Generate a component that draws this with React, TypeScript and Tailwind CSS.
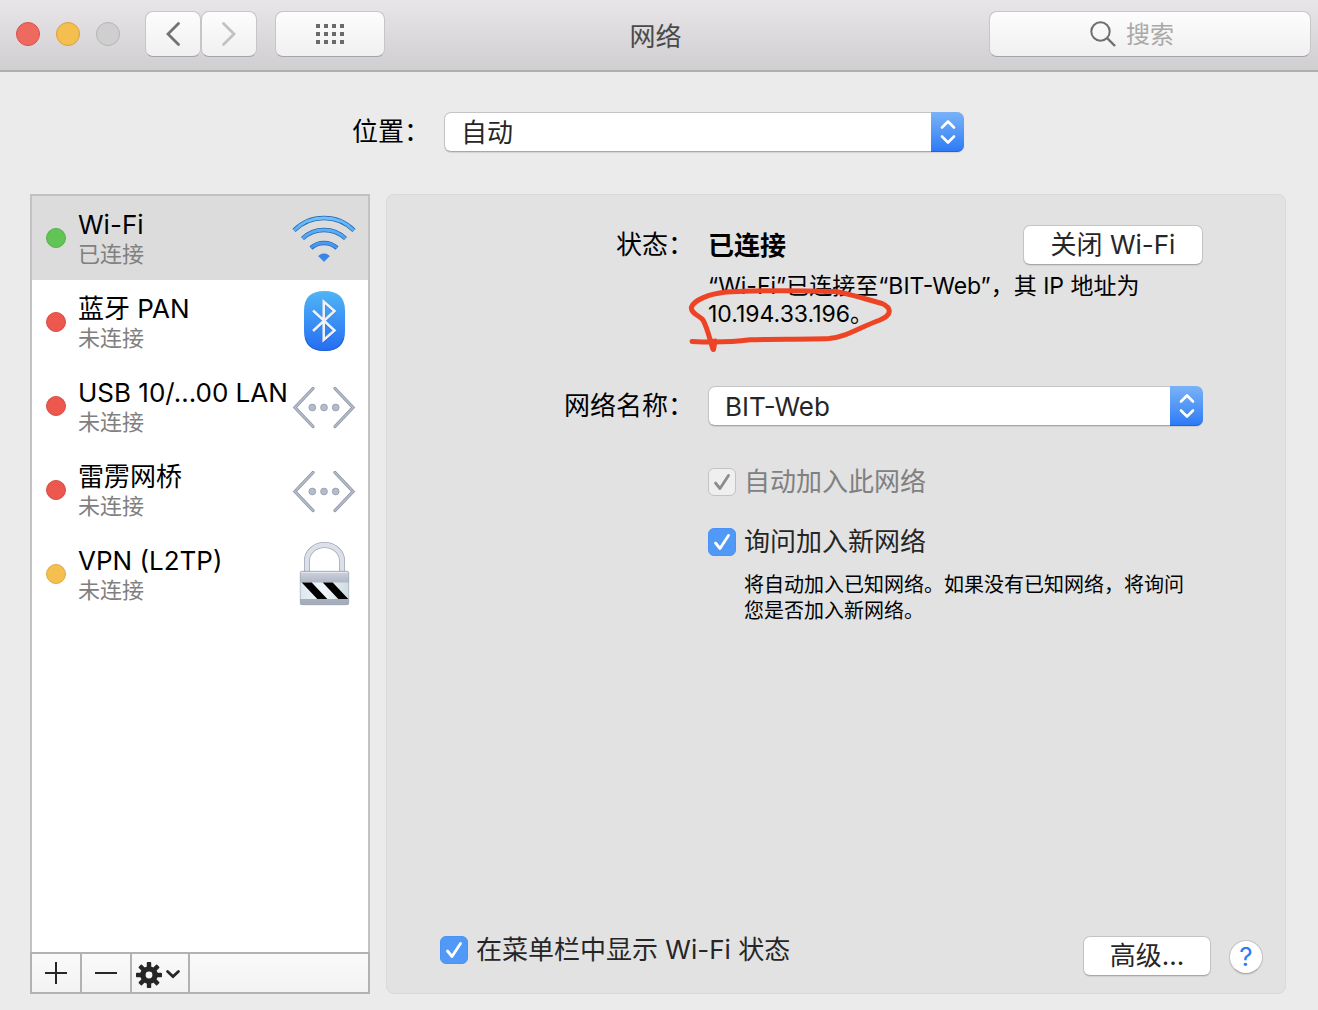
import type { ReactNode } from 'react';
import clsx from 'clsx';

type Status = 'green' | 'red' | 'yellow';

interface Service {
  name: string;
  state: string;
  status: Status;
  icon: ReactNode;
}

const dotStyles: Record<Status, string> = {
  green: 'bg-[#62c454] border-[#58b14b]',
  red: 'bg-[#ec574e] border-[#d54e46]',
  yellow: 'bg-[#f5bf4f] border-[#dcab46]',
};

function WifiIcon() {
  const arcs = [
    'M2 24.5A42.2 42.2 0 0 1 62 24.5',
    'M10.5 32.5A31.4 31.4 0 0 1 53.5 32.5',
    'M19 42A19.4 19.4 0 0 1 45 42',
  ];
  return (
    <svg viewBox="0 0 64 64" className="size-16" fill="none" aria-hidden="true">
      <defs>
        <linearGradient id="wifi" gradientUnits="userSpaceOnUse" x1="0" y1="10" x2="0" y2="56">
          <stop offset="0" stopColor="#6fc5fb" />
          <stop offset="1" stopColor="#2f7ff0" />
        </linearGradient>
      </defs>
      {arcs.map((d) => (
        <g key={d}>
          <path d={d} stroke="#2566b0" strokeWidth="4.4" />
          <path d={d} stroke="url(#wifi)" strokeWidth="2.8" />
        </g>
      ))}
      <path d="M26.500 50Q32 45.500 37.500 50L32 55.500Z" fill="#3487ee" stroke="#2b6fc4" strokeWidth="0.5" />
    </svg>
  );
}

function BluetoothIcon() {
  return (
    <svg viewBox="0 0 64 64" className="size-16" fill="none" aria-hidden="true">
      <defs>
        <linearGradient id="bt" x1="0" y1="0" x2="0" y2="1">
          <stop offset="0" stopColor="#50b5f5" />
          <stop offset="1" stopColor="#256df3" />
        </linearGradient>
      </defs>
      <path
        d="M32.500 1C46 1 53 7 53 21V41C53 55 46 61 32.500 61S12 55 12 41V21C12 7 19 1 32.500 1Z"
        fill="url(#bt)"
      />
      <path d="M13.500 48C16 57 22 60.500 32.500 60.500S49 57 51.500 48" stroke="#1c5bc8" strokeWidth="0.8" />
      <path
        d="M21 21L42.500 41.500L31.700 51V12L42.500 21.500L21 41.500"
        stroke="#1f5fc0"
        strokeOpacity="0.5"
        strokeWidth="3"
      />
      <path d="M21 20.500L42.500 40.500L31.700 50V11.500L42.500 21L21 41" stroke="#eef1f5" strokeWidth="2.6" />
    </svg>
  );
}

function EthernetIcon() {
  const left = 'M21 14.500L3 33.500L21 52.500';
  const right = 'M43 14.500L61 33.500L43 52.500';
  return (
    <svg viewBox="0 0 64 64" className="size-16" fill="none" aria-hidden="true">
      {[left, right].map((d) => (
        <g key={d} strokeLinecap="round">
          <path d={d} stroke="#8b92a2" strokeWidth="3.2" />
          <path d={d} stroke="#b4bccb" strokeWidth="1.8" />
        </g>
      ))}
      {[20.3, 32, 43.7].map((cx) => (
        <circle key={cx} cx={cx} cy="33.500" r="3.400" fill="#b4bccb" stroke="#949cac" strokeWidth="0.8" />
      ))}
    </svg>
  );
}

function LockIcon() {
  return (
    <svg viewBox="0 0 64 64" className="size-16" fill="none" aria-hidden="true">
      <defs>
        <linearGradient id="lock" x1="0" y1="0" x2="0" y2="1">
          <stop offset="0" stopColor="#cfd3dd" />
          <stop offset="0.300" stopColor="#b2b9c8" />
          <stop offset="1" stopColor="#a4abba" />
        </linearGradient>
        <linearGradient id="band" x1="0" y1="0" x2="1" y2="0">
          <stop offset="0" stopColor="#dde8ee" />
          <stop offset="0.500" stopColor="#f0f7fa" />
          <stop offset="1" stopColor="#cddbe0" />
        </linearGradient>
      </defs>
      <path d="M15 30V18.500A17.500 15.500 0 0 1 50 18.500V30" stroke="#a3abb9" strokeWidth="6" />
      <path d="M15 30V18.500A17.500 15.500 0 0 1 50 18.500V30" stroke="#dce0e8" strokeWidth="4.4" />
      <rect x="8.300" y="29.300" width="48.400" height="33.400" rx="1.500" fill="url(#lock)" stroke="#8e97a8" strokeWidth="0.7" />
      <path d="M9 30.500H56" stroke="#e3e6ec" />
      <rect x="8.500" y="40.500" width="48" height="16.500" fill="url(#band)" />
      <path d="M9.700 40.500H19.700L35.300 57H25.300ZM30.700 40.500H40.700L56.300 57H46.300Z" fill="#000" />
    </svg>
  );
}

function GearIcon() {
  return (
    <svg viewBox="0 0 26 26" className="size-[26px]" aria-hidden="true">
      <g fill="#262626">
        {[0, 45, 90, 135].map((angle) => (
          <rect key={angle} x="10.800" y="0" width="4.400" height="26" rx="0.800" transform={`rotate(${angle} 13 13)`} />
        ))}
        <circle cx="13" cy="13" r="8.800" />
      </g>
      <circle cx="13" cy="13" r="3.400" fill="#f8f8f8" />
    </svg>
  );
}

const services: Service[] = [
  { name: 'Wi-Fi', state: '已连接', status: 'green', icon: <WifiIcon /> },
  { name: '蓝牙 PAN', state: '未连接', status: 'red', icon: <BluetoothIcon /> },
  { name: 'USB 10/...00 LAN', state: '未连接', status: 'red', icon: <EthernetIcon /> },
  { name: '雷雳网桥', state: '未连接', status: 'red', icon: <EthernetIcon /> },
  { name: 'VPN (L2TP)', state: '未连接', status: 'yellow', icon: <LockIcon /> },
];

const toolbarButton =
  'flex h-[46px] items-center justify-center rounded-lg border border-[#c6c5c7] border-b-[#a5a4a6] bg-linear-to-b from-[#fdfdfd] to-[#f0f0f0]';

const pushButton =
  'h-10 rounded-[7px] border border-[#c4c4c4] border-b-[#a8a8a8] bg-white leading-9 text-[#262626] shadow-[0_1px_1px_rgba(0,0,0,0.08)]';

function PopUp({ id, options, className }: { id: string; options: string[]; className?: string }) {
  return (
    <div className={clsx('relative', className)}>
      <select
        id={id}
        className="block h-10 w-full appearance-none rounded-[7px] border border-[#c4c4c4] border-b-[#a8a8a8] bg-white pt-0.5 pr-10 pl-4 text-[26px] leading-9 text-[#262626] shadow-[0_1px_1px_rgba(0,0,0,0.1)]"
      >
        {options.map((option) => (
          <option key={option}>{option}</option>
        ))}
      </select>
      <span className="pointer-events-none absolute inset-y-0 right-0 flex w-[33px] items-center justify-center rounded-r-[7px] border-b border-[#1a62f0] bg-linear-to-b from-[#7ab2f6] to-[#2c7bf6]">
        <svg viewBox="0 0 16 26" className="h-[26px] w-4" fill="none" stroke="#fff" strokeWidth="2.600" strokeLinecap="round" strokeLinejoin="round" aria-hidden="true">
          <path d="M2 8.500L8 2.500L14 8.500M2 17.500L8 23.500L14 17.500" />
        </svg>
      </span>
    </div>
  );
}

function CheckField({ id, label, disabled }: { id: string; label: string; disabled?: boolean }) {
  return (
    <div className="flex items-center gap-2">
      <span className="relative size-7 shrink-0">
        <input
          id={id}
          type="checkbox"
          defaultChecked
          disabled={disabled}
          className="peer block size-7 appearance-none rounded-[6px] border border-[#a9a9a9] bg-white checked:border-[#4a92f5] checked:bg-[#5199f7] disabled:border-[#c3c3c3] disabled:bg-[#efefef]"
        />
        <svg
          viewBox="0 0 28 28"
          className="pointer-events-none absolute inset-0 hidden text-white peer-checked:block peer-disabled:text-[#8c8c8c]"
          fill="none"
          stroke="currentColor"
          strokeWidth="2.800"
          strokeLinecap="round"
          strokeLinejoin="round"
          aria-hidden="true"
        >
          <path d="M7.500 15L12 20.500L20.500 7.500" />
        </svg>
      </span>
      <label htmlFor={id} className={clsx('leading-7', disabled ? 'text-[#808080]' : 'text-[#262626]')}>
        {label}
      </label>
    </div>
  );
}

function TitleBar() {
  return (
    <header className="grid h-[72px] grid-cols-[1fr_auto_1fr] items-start border-b-2 border-[#b0afb0] bg-linear-to-b from-[#e8e6e9] to-[#d0ced1] pt-[11px] pr-[7px] pl-4">
      <div className="flex items-center">
        <div className="flex gap-4">
          <button aria-label="关闭" className="size-6 rounded-full border border-[#d8524a] bg-[#ee6a5f]" />
          <button aria-label="最小化" className="size-6 rounded-full border border-[#dba039] bg-[#f5bf4f]" />
          <button aria-label="缩放" disabled className="size-6 rounded-full border border-[#b5b3b6] bg-[#cfcfcf]" />
        </div>
        <div className="ml-[25px] flex">
          <button aria-label="后退" className={clsx(toolbarButton, 'w-14')}>
            <svg viewBox="0 0 16 26" className="h-[26px] w-4" fill="none" stroke="#727272" strokeWidth="2.800" strokeLinecap="round" aria-hidden="true">
              <path d="M13.500 2.500L3 13L13.500 23.500" />
            </svg>
          </button>
          <button aria-label="前进" disabled className={clsx(toolbarButton, 'w-14')}>
            <svg viewBox="0 0 16 26" className="h-[26px] w-4" fill="none" stroke="#c2c2c2" strokeWidth="2.800" strokeLinecap="round" aria-hidden="true">
              <path d="M2.500 2.500L13 13L2.500 23.500" />
            </svg>
          </button>
        </div>
        <button aria-label="显示全部" className={clsx(toolbarButton, 'ml-[18px] w-[110px]')}>
          <svg viewBox="0 0 28 20" className="h-5 w-7" fill="#6a6a6a" aria-hidden="true">
            {[0, 8, 16].map((y) => [0, 8, 16, 24].map((x) => <rect key={`${x}-${y}`} x={x} y={y} width="4" height="4" />))}
          </svg>
        </button>
      </div>
      <h1 className="pt-[6px] pr-4 text-[26px] leading-10 text-[#4a4a4a]">网络</h1>
      <div className={clsx(toolbarButton, 'w-[322px] justify-self-end pl-[100px]')}>
        <svg viewBox="0 0 26 26" className="size-[26px] shrink-0" fill="none" stroke="#6e6e6e" strokeWidth="2" aria-hidden="true">
          <circle cx="10.500" cy="10.500" r="9.200" />
          <path d="M17 17L25 25" strokeWidth="2.400" />
        </svg>
        <input
          type="search"
          aria-label="搜索"
          placeholder="搜索"
          className="min-w-0 flex-1 bg-transparent pt-0.5 pl-[10px] text-2xl leading-9 outline-none placeholder:text-[#a9a9a9]"
        />
      </div>
    </header>
  );
}

function Sidebar() {
  return (
    <aside className="flex w-[340px] shrink-0 flex-col border-2 border-[#c2c2c2] bg-white">
      <ul className="flex-1">
        {services.map((service, i) => (
          <li key={service.name}>
            <button className={clsx('flex h-[84px] w-full items-center pr-3 pl-[14px] text-left', i === 0 && 'bg-[#dcdcdc]')}>
              <span className={clsx('size-5 shrink-0 rounded-full border', dotStyles[service.status])} />
              <span className="ml-3 flex-1 pt-0.5 whitespace-nowrap">
                <span className="block leading-[30px] text-black">{service.name}</span>
                <span className="block text-[22px] leading-7 text-[#808080]">{service.state}</span>
              </span>
              {service.icon}
            </button>
          </li>
        ))}
      </ul>
      <div className="-mx-[2px] -mb-[2px] flex h-[42px] border-2 border-[#b2b2b2] bg-linear-to-b from-[#fafafa] to-[#f3f3f3]">
        <button aria-label="添加" className="flex w-[50px] items-center justify-center border-r-2 border-[#b2b2b2]">
          <svg viewBox="0 0 22 22" className="size-[22px]" stroke="#262626" strokeWidth="2" aria-hidden="true">
            <path d="M11 0V22M0 11H22" />
          </svg>
        </button>
        <button aria-label="移除" className="flex w-[50px] items-center justify-center border-r-2 border-[#b2b2b2]">
          <svg viewBox="0 0 22 22" className="size-[22px]" stroke="#262626" strokeWidth="2" aria-hidden="true">
            <path d="M0 11H22" />
          </svg>
        </button>
        <button aria-label="操作" className="flex w-[58px] items-center justify-center gap-1 border-r-2 border-[#b2b2b2] pt-1 pr-1">
          <GearIcon />
          <svg viewBox="0 0 14 10" className="h-[10px] w-[14px]" fill="none" stroke="#262626" strokeWidth="2.800" strokeLinecap="round" aria-hidden="true">
            <path d="M1.600 1.500L7 6.500L12.400 1.500" />
          </svg>
        </button>
      </div>
    </aside>
  );
}

// Hand-drawn circle around the IP address
function RedMark() {
  return (
    <svg
      viewBox="688 284 204 70"
      className="pointer-events-none absolute top-3 -left-5 h-[70px] w-[204px]"
      fill="none"
      stroke="#ee4426"
      strokeWidth="5"
      strokeLinecap="round"
      strokeLinejoin="round"
      aria-hidden="true"
    >
      <path d="M692 341.500C712 342.500 733 342 750 339.800C775 339 805 339.500 829 338.500C847 337 860 327 880 320C892 315 892 308 882 303.500C866 299 850 294 835 291.500C798 290.500 755 290.500 726 292C709 294 694 300 691.500 307C690 313 700 316 703 320C708 329 710 341 713 349" />
      <path d="M711.500 341L713.500 349.500L715 341" />
    </svg>
  );
}

function DetailPanel() {
  return (
    <section className="flex flex-1 flex-col rounded-lg border border-[#d9d9d9] bg-[#e2e2e2] pb-[17px]">
      <div className="grid grid-cols-[307px_1fr] gap-x-[14px] pt-[30px] pr-[82px]">
        <span className="text-right leading-10 text-black">状态：</span>
        <div>
          <div className="flex items-center justify-between">
            <strong className="font-bold text-black">已连接</strong>
            <button className={clsx(pushButton, 'w-[180px]')}>关闭 Wi-Fi</button>
          </div>
          <p className="relative mt-[7px] text-[23px] leading-7 text-black">
            “Wi-Fi”已连接至“BIT-Web”，其 IP 地址为
            <br />
            10.194.33.196。
            <RedMark />
          </p>
        </div>

        <label htmlFor="network" className="mt-[58px] text-right leading-10 text-black">
          网络名称：
        </label>
        <PopUp id="network" options={['BIT-Web']} className="mt-[58px]" />

        <div className="col-start-2 mt-[42px]">
          <CheckField id="auto-join" label="自动加入此网络" disabled />
          <div className="mt-8">
            <CheckField id="ask-join" label="询问加入新网络" />
          </div>
          <p className="mt-4 ml-9 text-xl leading-[26px] text-black">将自动加入已知网络。如果没有已知网络，将询问您是否加入新网络。</p>
        </div>
      </div>

      <div className="mt-auto flex items-start pr-[22px] pl-[53px]">
        <CheckField id="menu-bar" label="在菜单栏中显示 Wi-Fi 状态" />
        <button className={clsx(pushButton, 'ml-auto w-32')}>高级...</button>
        <button
          aria-label="帮助"
          className="mt-1 ml-[18px] size-[34px] rounded-full border border-[#c4c4c4] border-b-[#a8a8a8] bg-white leading-8 text-[#2c7bf6] shadow-[0_1px_1px_rgba(0,0,0,0.1)]"
        >
          ?
        </button>
      </div>
    </section>
  );
}

export default function App() {
  return (
    <div className="flex min-h-screen flex-col bg-[#ebebeb] font-[Inter,'Noto_Sans_CJK_SC',sans-serif] text-[26px]" lang="zh-CN">
      <TitleBar />
      <div className="mt-10 flex items-center justify-center gap-[14px] pr-0.5">
        <label htmlFor="location" className="leading-10 text-black">
          位置：
        </label>
        <PopUp id="location" options={['自动']} className="w-[520px]" />
      </div>
      <main className="mt-[42px] flex flex-1 gap-4 pr-8 pb-4 pl-[30px]">
        <Sidebar />
        <DetailPanel />
      </main>
    </div>
  );
}
